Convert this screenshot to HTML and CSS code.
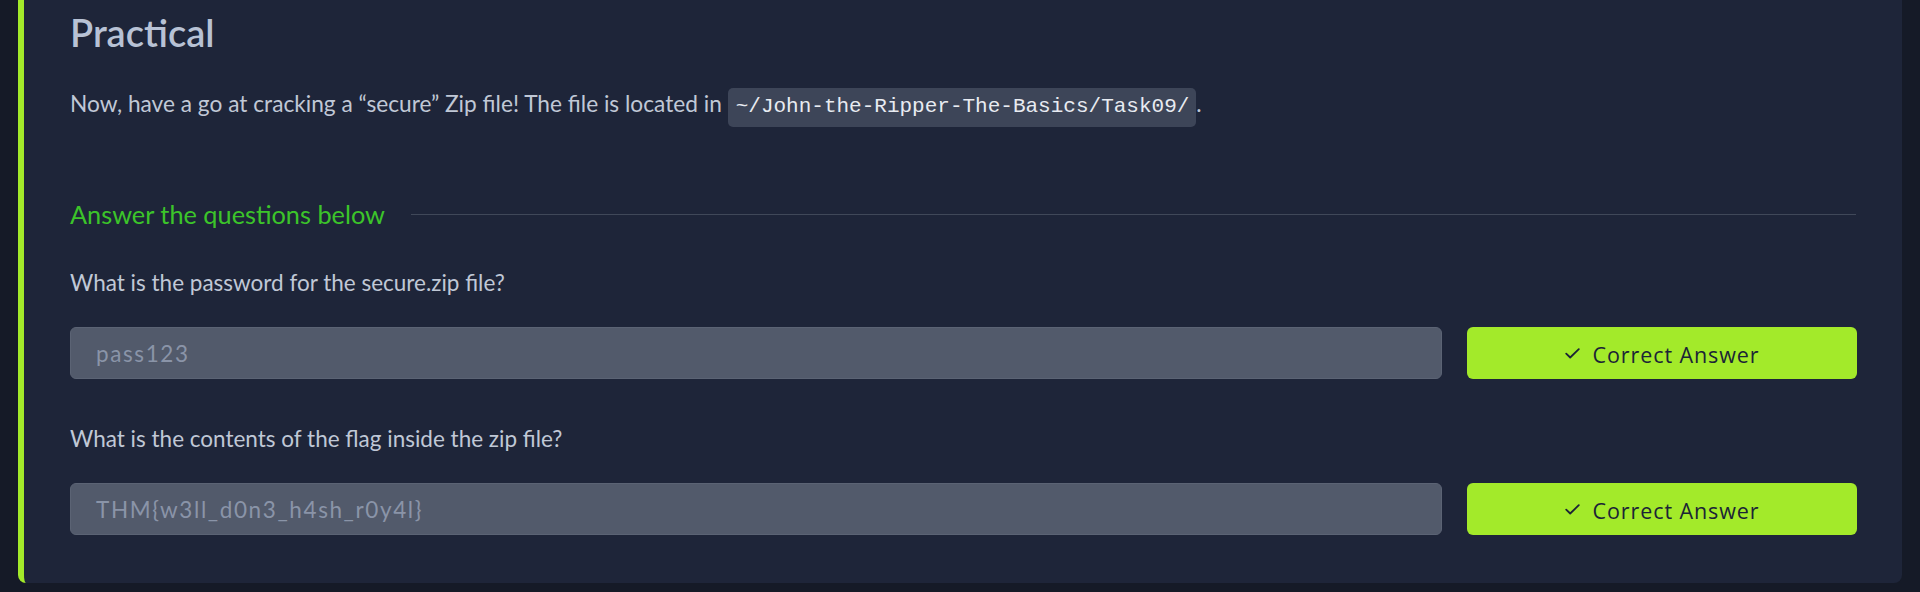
FILE: index.html
```html
<!DOCTYPE html>
<html lang="en">
<head>
<meta charset="utf-8">
<title>Practical</title>
<link rel="stylesheet" href="styles.css">
</head>
<body>
<div class="page">
  <section class="task">
    <h2 class="title">Practical</h2>
    <p class="text">Now, have a go at cracking a “secure” Zip file! The file is located in <code class="code">~/John-the-Ripper-The-Basics/Task09/</code>.</p>

    <div class="answers">
      <div class="answers-head">
        <span class="answers-label">Answer the questions below</span>
        <span class="answers-rule"></span>
      </div>

      <div class="question">
        <p class="q-text">What is the password for the secure.zip file?</p>
        <div class="q-row">
          <div class="answer">pass123</div>
          <button class="correct" type="button">
            <svg class="check" width="15" height="11" viewBox="0 0 15 11"><polyline points="1.2,5.6 5.2,9.5 13.8,1.2" fill="none" stroke="currentColor" stroke-width="1.8" stroke-linecap="round" stroke-linejoin="round"/></svg>
            <span>Correct Answer</span>
          </button>
        </div>
      </div>

      <div class="question">
        <p class="q-text">What is the contents of the flag inside the zip file?</p>
        <div class="q-row">
          <div class="answer">THM{w3ll_d0n3_h4sh_r0y4l}</div>
          <button class="correct" type="button">
            <svg class="check" width="15" height="11" viewBox="0 0 15 11"><polyline points="1.2,5.6 5.2,9.5 13.8,1.2" fill="none" stroke="currentColor" stroke-width="1.8" stroke-linecap="round" stroke-linejoin="round"/></svg>
            <span>Correct Answer</span>
          </button>
        </div>
      </div>
    </div>
  </section>
</div>
</body>
</html>
```

FILE: styles.css
```css
* { box-sizing: border-box; }

html, body {
  margin: 0;
  padding: 0;
  background: #151a27;
  height: 592px;
  overflow: hidden;
}

.page {
  padding: 0 18px 10px 18px;
}

.task {
  background: #1e2539;
  border-left: 6px solid #a3ea2a;
  border-radius: 0 0 8px 8px;
  padding: 10px 45px 48px 46px;
  font-family: Lato, "Liberation Sans", sans-serif;
  color: #c3cad6;
}

.title {
  margin: 0;
  font-size: 38px;
  line-height: 44px;
  font-weight: 600;
  color: #b8c2d5;
}

.text {
  margin: 34px 0 0 0;
  font-size: 22.7px;
  line-height: 32px;
  color: #c0c8d6;
}

.code {
  font-family: "Liberation Mono", "DejaVu Sans Mono", monospace;
  font-size: 21px;
  background: #3d4558;
  color: #e8ebf1;
  padding: 7px 7px 9px 8px;
  border-radius: 5px;
}

.answers {
  margin-top: 75px;
}

.answers-head {
  display: flex;
  align-items: center;
  gap: 26px;
  height: 32px;
}

.answers-label {
  font-size: 25.3px;
  line-height: 32px;
  color: #3cc42a;
  white-space: nowrap;
}

.answers-rule {
  flex: 1;
  height: 1px;
  background: #404859;
  margin-right: 1px;
}

.question {
  margin-top: 37px;
}

.question + .question {
  margin-top: 44px;
}

.q-text {
  margin: 0;
  font-size: 22.5px;
  line-height: 32px;
  color: #c0c8d6;
}

.q-row {
  display: flex;
  gap: 25px;
  margin-top: 28px;
}

.answer {
  flex: 1;
  height: 52px;
  display: flex;
  align-items: center;
  padding: 0 25px;
  background: #525a6b;
  border: 1px solid #5b6374;
  border-radius: 6px;
  font-size: 22.5px;
  letter-spacing: 1.6px;
  color: #8a94a8;
}

.correct {
  width: 390px;
  height: 52px;
  display: flex;
  align-items: center;
  justify-content: center;
  gap: 13px;
  border: 0;
  border-radius: 6px;
  background: #a3ea2a;
  color: #1b2436;
  font-family: "Open Sans", "Noto Sans", sans-serif;
  font-size: 21.5px;
  letter-spacing: 0.9px;
  padding: 2px 0 0 0;
}

.check {
  display: block;
  margin-top: -2px;
}
```
